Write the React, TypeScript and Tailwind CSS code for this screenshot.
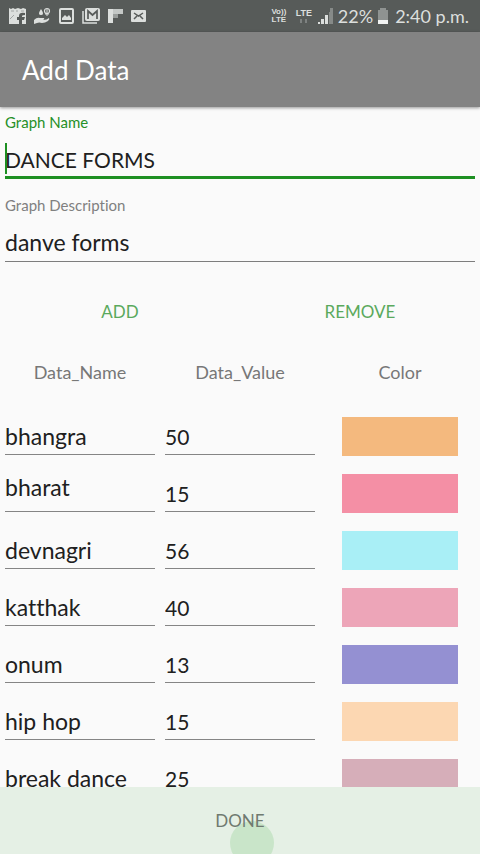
import { useState } from "react";

type Entry = { name: string; value: string; swatch: string; composing?: boolean };

const initialEntries: Entry[] = [
  { name: "bhangra", value: "50", swatch: "bg-[#f4b97e]" },
  { name: "bharat", value: "15", swatch: "bg-[#f48fa5]", composing: true },
  { name: "devnagri", value: "56", swatch: "bg-[#a9eff6]" },
  { name: "katthak", value: "40", swatch: "bg-[#eda5b8]" },
  { name: "onum", value: "13", swatch: "bg-[#9490d2]" },
  { name: "hip hop", value: "15", swatch: "bg-[#fcd7b2]" },
  { name: "break dance", value: "25", swatch: "bg-[#d6aeb9]" },
];

function NotificationIcons() {
  return (
    <div className="flex items-center gap-[6px] text-[#dcdfdd]" aria-hidden="true">
      {/* Facebook photo */}
      <svg width="19" height="18" viewBox="0 0 19 18">
        <path fill="currentColor" d="M1 1l2 1 2-1 2 1 3-1 3 1 2-1 3 1v15h-4v-4h2l1-3h-3V9q0-1 3-1V6q-6-1-6 3v1H9v3h2v4H1z" />
        <path d="M3 4h3M8 4h2M13 4h3M2 12l4-4" stroke="#a2a6a4" strokeWidth="1" fill="none" />
      </svg>
      {/* Hand with water drops */}
      <svg width="18" height="18" viewBox="0 0 18 18" fill="none" stroke="currentColor">
        <path fill="currentColor" stroke="none" d="M1 13q3-3 6-2h4q1 1-1 2 4 0 6-2 1 1-1 3-3 2-6 2-3-1-5 0l-3 1zM8 2q4 6 0 6-4 0 0-6z" />
        <circle cx="14" cy="4" r="2.500" strokeWidth="1.200" />
        <path d="M14 2v7M12 7h4" strokeWidth="1" />
      </svg>
      {/* Picture */}
      <svg width="18" height="18" viewBox="0 0 18 18">
        <rect x="3" y="2" width="13" height="14" rx="1" fill="none" stroke="currentColor" strokeWidth="2" />
        <path fill="currentColor" d="M5 13V11l3-3 2 2 2-2 2 3v2z" />
      </svg>
      {/* Stacked mail */}
      <svg width="20" height="18" viewBox="0 0 20 18" fill="none" stroke="currentColor">
        <path d="M2 4v12h14" strokeWidth="1.5" />
        <rect x="4.5" y="1.5" width="14" height="12" rx="1" fill="currentColor" />
        <path d="M7 12V4l4.500 4L16 4v8" stroke="#585c5a" strokeWidth="1.700" />
      </svg>
      {/* Flipboard */}
      <svg width="17" height="18" viewBox="0 0 17 18">
        <path fill="currentColor" d="M1 2h5v14H1z" />
        <path fill="#c4c8c6" d="M6 2h10v5H6z" />
        <path fill="#999d9b" d="M6 7h5v4H6z" />
      </svg>
      {/* Envelope */}
      <svg width="18" height="18" viewBox="0 0 18 18">
        <rect x="1" y="3" width="15" height="12" rx="1" fill="currentColor" />
        <path d="M4 6l4.500 3L13 6M4 12l3-3M13 12l-3-3" fill="none" stroke="#585c5a" strokeWidth="1.500" />
      </svg>
    </div>
  );
}

function StatusBar() {
  return (
    <div className="flex h-8 shrink-0 items-center justify-between bg-[#575b59] pr-[11px] pl-2 text-[#dcdfdd]">
      <NotificationIcons />
      <div className="flex items-center text-[18px] leading-5">
        <div className="flex w-4 flex-col items-center font-['Liberation_Sans',sans-serif] text-[8px] leading-[8px] font-bold">
          <span>Vo))</span>
          <span>LTE</span>
        </div>
        <div className="ml-2 flex w-[18px] flex-col items-center font-['Liberation_Sans',sans-serif] text-[9px] leading-[9px] font-bold">
          <span>LTE</span>
          <svg width="9" height="6" viewBox="0 0 9 6" aria-hidden="true">
            <path d="M2 1v4M7 1v4" stroke="#8c908e" strokeWidth="1.500" />
          </svg>
        </div>
        <svg className="ml-1" width="17" height="18" viewBox="0 0 17 18" aria-hidden="true">
          <path fill="currentColor" d="M1 15h2v2H1zM4 12h3v5H4zM8 8h3v9H8z" />
          <path fill="#868a88" d="M12 5h1v12h-1zM13 1h3v16h-3z" />
        </svg>
        <span className="ml-1">22%</span>
        <svg className="ml-1" width="12" height="18" viewBox="0 0 12 18" aria-hidden="true">
          <path fill="#8f9391" d="M3 1h6v2h2v10H1V3h2z" />
          <path fill="#f1f3f2" d="M1 13h10v4H1z" />
        </svg>
        <span className="ml-1.5">2:40 p.m.</span>
      </div>
    </div>
  );
}

export default function App() {
  const [graphName, setGraphName] = useState("DANCE FORMS");
  const [description, setDescription] = useState("danve forms");
  const [entries, setEntries] = useState(initialEntries);

  const update = (index: number, patch: Partial<Entry>) =>
    setEntries(entries.map((entry, i) => (i === index ? { ...entry, ...patch } : entry)));

  return (
    <div className="flex h-screen flex-col overflow-hidden bg-[#fafafa] font-[Lato,sans-serif] text-[#202020] [font-variant-ligatures:none]">
      <StatusBar />
      <header className="z-10 flex h-[75px] shrink-0 items-center bg-[#838383] px-[22px] shadow-[0_1px_3px_rgba(0,0,0,0.4)]">
        <h1 className="text-[26px] leading-8 text-white">Add Data</h1>
      </header>

      <main className="min-h-0 flex-1 overflow-hidden pt-[5px]">
        <div className="flex flex-col gap-4 px-[5px]">
          <div>
            <label htmlFor="graph-name" className="block text-[15px] leading-5 text-[#259028]">
              Graph Name
            </label>
            <div className="relative">
              <input
                id="graph-name"
                value={graphName}
                onChange={(e) => setGraphName(e.target.value)}
                className="block h-[47px] w-full border-b-3 border-[#1d8f22] bg-transparent pt-2.5 text-[21px] leading-8 outline-none"
              />
              <span className="absolute top-[11px] left-0 h-[31px] w-[2px] bg-[#1d8f22]" />
            </div>
          </div>
          <div>
            <label htmlFor="graph-description" className="block text-[15px] leading-5 text-[#808080]">
              Graph Description
            </label>
            <input
              id="graph-description"
              value={description}
              onChange={(e) => setDescription(e.target.value)}
              className="block h-[47px] w-full border-b border-[#7d7d7d] bg-transparent pt-2 text-[23px] leading-8 outline-none"
            />
          </div>
        </div>

        <div className="mt-6 grid h-[51px] grid-cols-2 text-[17px] text-[#5aa95d]">
          <button type="button">ADD</button>
          <button type="button">REMOVE</button>
        </div>

        <table className="w-full table-fixed border-collapse">
          <thead>
            <tr className="h-[71px] text-[18px] text-[#777777]">
              <th className="p-0 font-normal">Data_Name</th>
              <th className="p-0 font-normal">Data_Value</th>
              <th className="p-0 font-normal">Color</th>
            </tr>
          </thead>
          <tbody>
            {entries.map((entry, i) => (
              <tr key={i} className="h-[57px]">
                <td className="px-[5px] py-0">
                  <input
                    aria-label={`Data name ${i + 1}`}
                    value={entry.name}
                    onChange={(e) => update(i, { name: e.target.value })}
                    className={`block h-9 w-full border-b border-[#858585] bg-transparent text-[23px] leading-6 outline-none ${
                      entry.composing ? "pb-3" : ""
                    }`}
                  />
                </td>
                <td className="px-[5px] py-0">
                  <input
                    aria-label={`Data value ${i + 1}`}
                    value={entry.value}
                    onChange={(e) => update(i, { value: e.target.value })}
                    className="block h-9 w-full border-b border-[#858585] bg-transparent text-[21px] leading-6 outline-none"
                  />
                </td>
                <td className="px-[22px] py-0">
                  <button
                    type="button"
                    aria-label={`Color for ${entry.name}`}
                    className={`block h-[39px] w-full ${entry.swatch}`}
                  />
                </td>
              </tr>
            ))}
          </tbody>
        </table>
      </main>

      <button
        type="button"
        className="relative h-[67px] shrink-0 overflow-hidden bg-[#e5f0e5] text-[17px] text-[#6f7a70]"
      >
        <span className="absolute top-[34px] left-1/2 ml-[-10px] size-[44px] rounded-full bg-[#c9e5c9]" />
        <span className="relative">DONE</span>
      </button>
    </div>
  );
}
